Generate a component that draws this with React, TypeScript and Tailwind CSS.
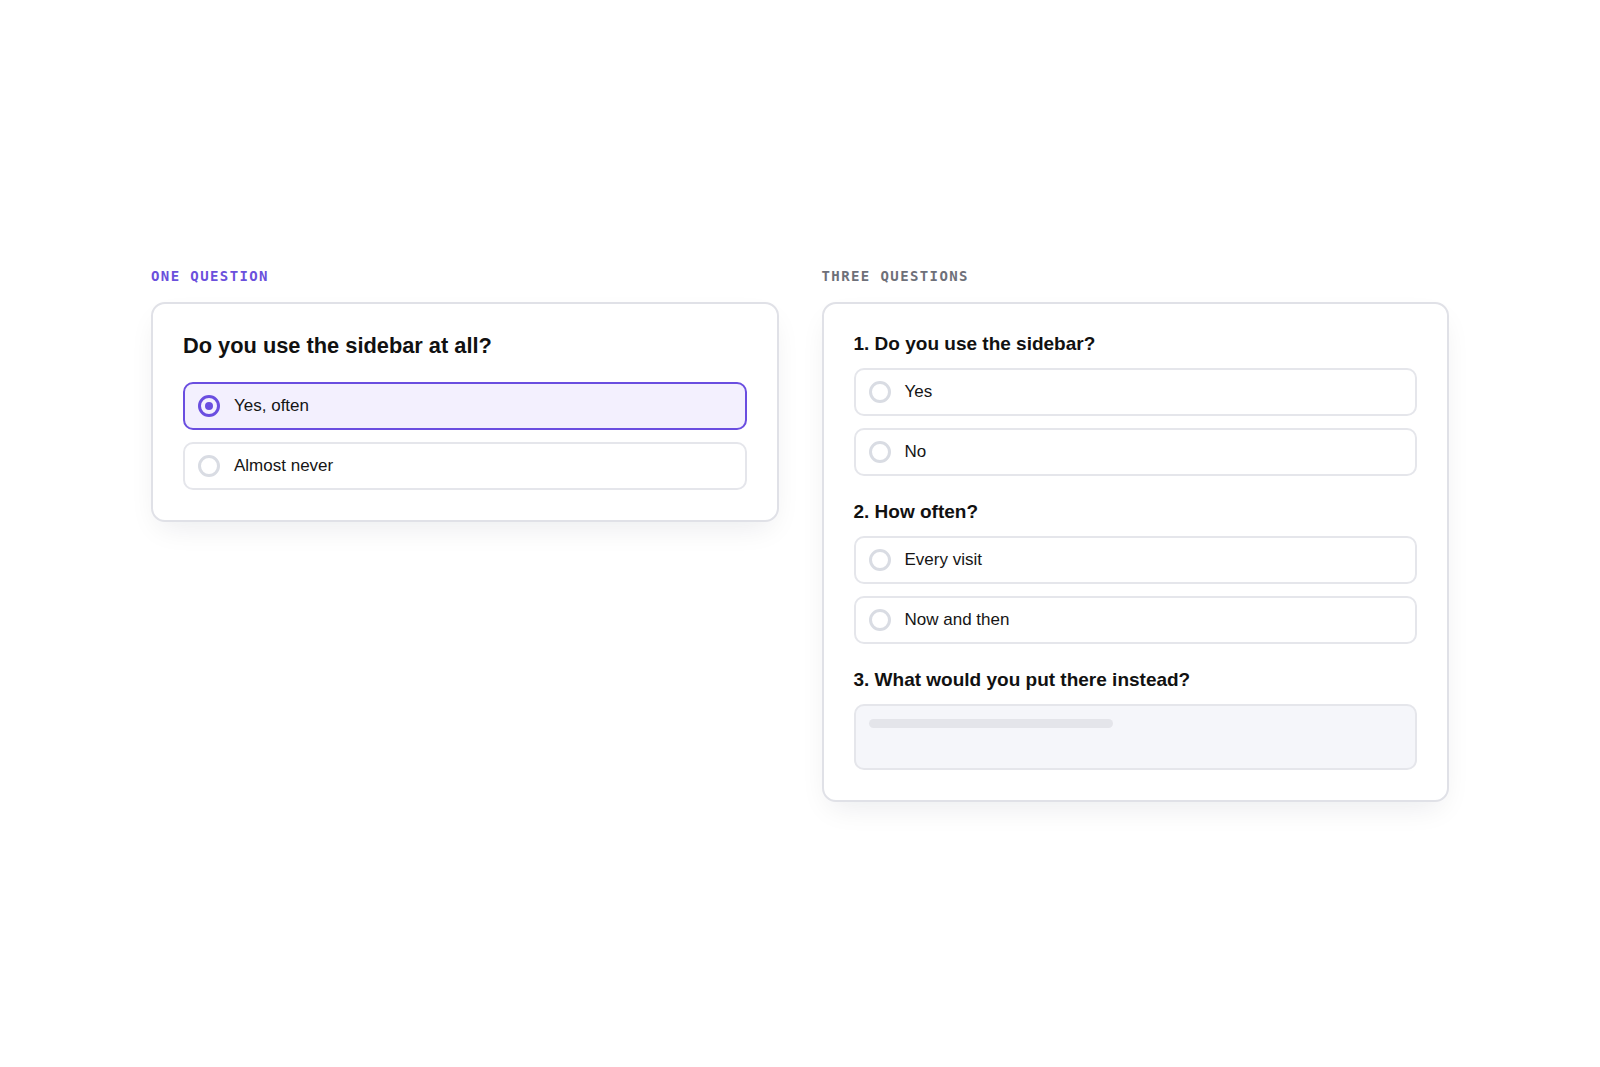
const sans = "font-['Liberation_Sans','Helvetica_Neue',Arial,sans-serif]";
const mono = "font-['DejaVu_Sans_Mono','Liberation_Mono',monospace]";

type Option = { label: string; selected?: boolean };

function Radio({ selected }: { selected?: boolean }) {
    if (selected) {
        return (
            <span className="flex w-[22px] h-[22px] shrink-0 items-center justify-center rounded-full border-[3px] border-[#6a4ee0]">
                <span className="w-[8px] h-[8px] rounded-full bg-[#6a4ee0]" />
            </span>
        );
    }
    return <span className="w-[22px] h-[22px] shrink-0 rounded-full border-[3px] border-[#d9dce3]" />;
}

function Choice({ label, selected }: Option) {
    return (
        <div
            className={
                selected
                    ? "flex h-12 items-center gap-[14px] rounded-[10px] border-2 border-[#6a4ee0] bg-[#f3f0fe] pl-[13px]"
                    : "flex h-12 items-center gap-[14px] rounded-[10px] border-2 border-[#e5e6eb] bg-white pl-[13px]"
            }
        >
            <Radio selected={selected} />
            <span className="text-[17px] leading-6 text-[#151515]">{label}</span>
        </div>
    );
}

function Question({ title, options }: { title: string; options: Option[] }) {
    return (
        <div>
            <h3 className="mb-3 text-[19px] font-bold leading-6 text-[#111]">{title}</h3>
            <div className="flex flex-col gap-3">
                {options.map((o) => (
                    <Choice key={o.label} {...o} />
                ))}
            </div>
        </div>
    );
}

function Panel({ label, accent, children }: { label: string; accent?: boolean; children: React.ReactNode }) {
    return (
        <div className="flex flex-col">
            <div
                className={`${mono} mb-4 text-[14px] font-bold leading-5 tracking-[0.1em] ${
                    accent ? "text-[#6b50dc]" : "text-[#6e7079]"
                }`}
            >
                {label}
            </div>
            <div className="rounded-[14px] border-2 border-[#e0e1e7] bg-white px-[30px] pt-7 pb-[30px] shadow-[0_12px_30px_-8px_rgba(15,23,42,0.09)]">
                {children}
            </div>
        </div>
    );
}

export default function App() {
    return (
        <div className={`${sans} flex min-h-screen items-center justify-center bg-white`}>
            <div className="grid w-[1298px] grid-cols-2 items-start gap-[43px]">
                <Panel label="ONE QUESTION" accent>
                    <h2 className="mb-[22px] text-[21.8px] font-bold leading-7 text-[#111]">
                        Do you use the sidebar at all?
                    </h2>
                    <div className="flex flex-col gap-3">
                        <Choice label="Yes, often" selected />
                        <Choice label="Almost never" />
                    </div>
                </Panel>

                <Panel label="THREE QUESTIONS">
                    <div className="flex flex-col gap-6">
                        <Question
                            title="1. Do you use the sidebar?"
                            options={[{ label: "Yes" }, { label: "No" }]}
                        />
                        <Question
                            title="2. How often?"
                            options={[{ label: "Every visit" }, { label: "Now and then" }]}
                        />
                        <div>
                            <h3 className="mb-3 text-[19px] font-bold leading-6 text-[#111]">
                                3. What would you put there instead?
                            </h3>
                            {/* empty free-text answer with a placeholder line */}
                            <div className="h-[66px] rounded-[10px] border-2 border-[#e5e6eb] bg-[#f5f6fa] px-[13px] pt-[13px]">
                                <div className="h-[9px] w-[244px] rounded-full bg-[#e4e5ea]" />
                            </div>
                        </div>
                    </div>
                </Panel>
            </div>
        </div>
    );
}
